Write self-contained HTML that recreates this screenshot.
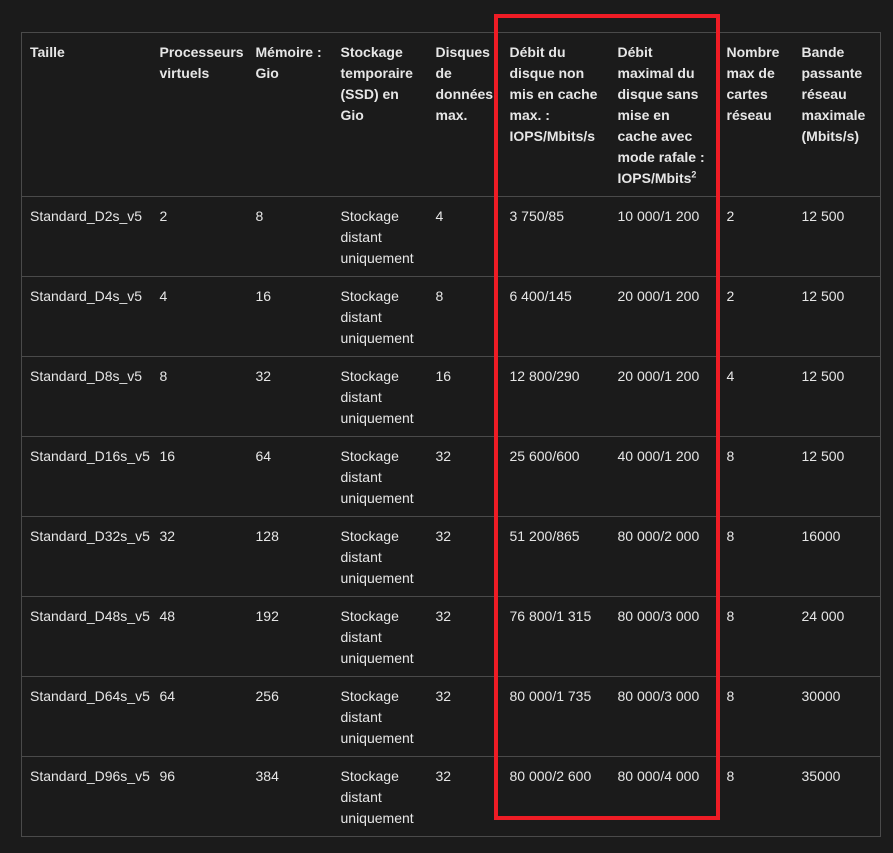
<!DOCTYPE html>
<html><head><style>
body{margin:0;background:#1b1b1b;width:893px;height:853px;overflow:hidden;font-family:"Liberation Sans",sans-serif;color:#e6e6e6;font-size:14px;}
table{position:absolute;left:21px;top:32px;border-collapse:collapse;border:1px solid #4a4a4a;table-layout:fixed;width:859px}
td,th{padding:9px 7px 0 8px;vertical-align:top;line-height:21px;text-align:left;border-top:1px solid #4a4a4a;box-sizing:border-box}
th{font-weight:bold;height:164px}
td{height:80px}
sup{font-size:9px;line-height:0}
.red{position:absolute;left:494px;top:14px;width:218px;height:798px;border:4px solid #ee1c25}
</style></head><body>
<table>
<colgroup><col style="width:130px"><col style="width:96px"><col style="width:85px"><col style="width:95px"><col style="width:74px"><col style="width:108px"><col style="width:109px"><col style="width:75px"><col style="width:87px"></colgroup>
<tr><th>Taille</th><th>Processeurs virtuels</th><th>Mémoire : Gio</th><th>Stockage temporaire (SSD) en Gio</th><th>Disques de données max.</th><th>Débit du disque non mis en cache max. : IOPS/Mbits/s</th><th>Débit maximal du disque sans mise en cache avec mode rafale : IOPS/Mbits<sup>2</sup></th><th>Nombre max de cartes réseau</th><th>Bande passante réseau maximale (Mbits/s)</th></tr>
<tr><td>Standard_D2s_v5</td><td>2</td><td>8</td><td>Stockage distant uniquement</td><td>4</td><td>3 750/85</td><td>10 000/1 200</td><td>2</td><td>12 500</td></tr>
<tr><td>Standard_D4s_v5</td><td>4</td><td>16</td><td>Stockage distant uniquement</td><td>8</td><td>6 400/145</td><td>20 000/1 200</td><td>2</td><td>12 500</td></tr>
<tr><td>Standard_D8s_v5</td><td>8</td><td>32</td><td>Stockage distant uniquement</td><td>16</td><td>12 800/290</td><td>20 000/1 200</td><td>4</td><td>12 500</td></tr>
<tr><td>Standard_D16s_v5</td><td>16</td><td>64</td><td>Stockage distant uniquement</td><td>32</td><td>25 600/600</td><td>40 000/1 200</td><td>8</td><td>12 500</td></tr>
<tr><td>Standard_D32s_v5</td><td>32</td><td>128</td><td>Stockage distant uniquement</td><td>32</td><td>51 200/865</td><td>80 000/2 000</td><td>8</td><td>16000</td></tr>
<tr><td>Standard_D48s_v5</td><td>48</td><td>192</td><td>Stockage distant uniquement</td><td>32</td><td>76 800/1 315</td><td>80 000/3 000</td><td>8</td><td>24 000</td></tr>
<tr><td>Standard_D64s_v5</td><td>64</td><td>256</td><td>Stockage distant uniquement</td><td>32</td><td>80 000/1 735</td><td>80 000/3 000</td><td>8</td><td>30000</td></tr>
<tr><td>Standard_D96s_v5</td><td>96</td><td>384</td><td>Stockage distant uniquement</td><td>32</td><td>80 000/2 600</td><td>80 000/4 000</td><td>8</td><td>35000</td></tr>
</table>
<div class="red"></div>
</body></html>
